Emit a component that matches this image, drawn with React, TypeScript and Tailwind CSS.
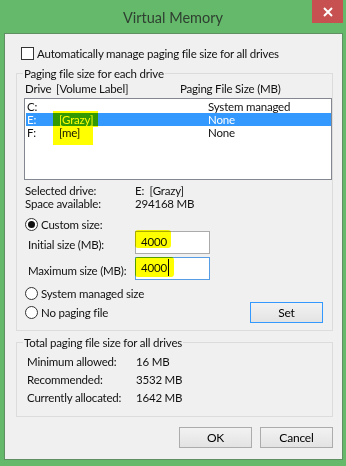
import React from "react";

const font = { fontFamily: 'Lato, "Noto Sans", sans-serif' };

function Radio({ checked }: { checked?: boolean }) {
  return (
    <span className="w-[13px] h-[13px] rounded-full border border-[#333333] bg-white flex items-center justify-center shrink-0">
      {checked && <span className="w-[7px] h-[7px] rounded-full bg-[#111111]" />}
    </span>
  );
}

function Btn({ label, focused }: { label: string; focused?: boolean }) {
  return (
    <div
      className={
        "w-[73px] h-[21px] flex items-center justify-center border bg-gradient-to-b from-[#f2f2f2] to-[#e3e3e3] text-[12px] text-black " +
        (focused ? "border-[#3399ff]" : "border-[#acacac]")
      }
    >
      {label}
    </div>
  );
}

export default function App() {
  return (
    <div
      className="relative w-[346px] h-[466px] bg-[#65b96a] overflow-hidden text-[11.5px] tracking-[-0.2px] text-[#111111]"
      style={font}
    >
      {/* Title bar */}
      <div className="h-[33px] flex items-center justify-center text-[14.5px] tracking-normal text-[#2f3f31] pt-[3px]">
        Virtual Memory
      </div>
      <div className="absolute top-0 left-[312px] w-[31px] h-[23px] bg-[#c75050] flex items-center justify-center">
        <svg width="10" height="10" viewBox="0 0 10 10">
          <path d="M1 1 L9 9 M9 1 L1 9" stroke="white" strokeWidth="2" />
        </svg>
      </div>

      {/* Client area */}
      <div className="ml-[4px] w-[339px] h-[427px] bg-[#f0f0f0] border border-[#5f8f63] flex flex-col">
        {/* Checkbox row */}
        <div className="mt-[13px] ml-[16px] h-[13px] flex items-center gap-[3px]">
          <span className="w-[13px] h-[13px] border border-[#333333] bg-white shrink-0" />
          <span className="leading-[13px] whitespace-nowrap">Automatically manage paging file size for all drives</span>
        </div>

        {/* Group 1 */}
        <fieldset className="mt-[6px] ml-[11px] w-[317px] border border-[#dcdcdc] p-0 m-0 flex flex-col">
          <legend className="ml-[6px] px-[1px] leading-[15px]">Paging file size for each drive</legend>
          <div className="mt-[1px] h-[14px] leading-[14px] flex whitespace-nowrap">
            <span className="ml-[8px] w-[31px]">Drive</span>
            <span className="w-[124px]">[Volume Label]</span>
            <span>Paging File Size (MB)</span>
          </div>
          <div className="mt-[2px] ml-[7px] w-[308px] h-[82px] border border-[#828790] bg-white pt-[1px] flex flex-col">
            <div className="ml-[1px] h-[13px] leading-[13px] flex whitespace-nowrap">
              <span className="pl-[1px] w-[33px]">C:</span>
              <span className="w-[149px]"></span>
              <span>System managed</span>
            </div>
            <div className="ml-[1px] h-[13px] leading-[13px] flex whitespace-nowrap bg-[#3399ff] text-white">
              <span className="pl-[1px] w-[33px]">E:</span>
              <span className="w-[149px]">[Grazy]</span>
              <span>None</span>
            </div>
            <div className="ml-[1px] h-[13px] leading-[13px] flex whitespace-nowrap">
              <span className="pl-[1px] w-[33px]">F:</span>
              <span className="w-[149px]">[me]</span>
              <span>None</span>
            </div>
          </div>

          <div className="mt-[4px] ml-[8px] h-[13px] leading-[13px] flex whitespace-nowrap">
            <span className="w-[110px]">Selected drive:</span>
            <span>E:&nbsp;&nbsp;[Grazy]</span>
          </div>
          <div className="ml-[8px] h-[13px] leading-[13px] flex whitespace-nowrap">
            <span className="w-[110px]">Space available:</span>
            <span>294168 MB</span>
          </div>

          <div className="mt-[8px] ml-[8px] h-[13px] flex items-center gap-[3px]">
            <Radio checked />
            <span className="leading-[13px] whitespace-nowrap">Custom size:</span>
          </div>
          <div className="ml-[11px] flex items-center whitespace-nowrap">
            <span className="w-[107px] leading-[13px] pt-[3px]">Initial size (MB):</span>
            <div className="w-[75px] h-[23px] border border-[#ababab] bg-white flex items-center pl-[5px] pb-[2px]">4000</div>
          </div>
          <div className="mt-[3px] ml-[11px] flex items-center whitespace-nowrap">
            <span className="w-[107px] leading-[13px] pt-[3px]">Maximum size (MB):</span>
            <div className="w-[75px] h-[23px] border border-[#569de5] bg-white flex items-center pl-[5px] pb-[2px]">
              4000<span className="ml-[1px] w-[1px] h-[17px] bg-black" />
            </div>
          </div>
          <div className="mt-[7px] ml-[8px] h-[13px] flex items-center gap-[3px]">
            <Radio />
            <span className="leading-[13px] whitespace-nowrap">System managed size</span>
          </div>
          <div className="mt-[2px] ml-[8px] mr-[9px] h-[21px] flex items-center justify-between">
            <div className="flex items-center gap-[3px]">
              <Radio />
              <span className="leading-[13px] whitespace-nowrap">No paging file</span>
            </div>
            <Btn label="Set" focused />
          </div>
          <div className="h-[7px]" />
        </fieldset>

        {/* Group 2 */}
        <fieldset className="mt-[4px] ml-[11px] w-[317px] border border-[#dcdcdc] p-0 m-0 flex flex-col">
          <legend className="ml-[6px] px-[1px] leading-[15px]">Total paging file size for all drives</legend>
          <div className="mt-[3px] ml-[10px] h-[18px] leading-[18px] flex whitespace-nowrap">
            <span className="w-[109px]">Minimum allowed:</span>
            <span>16 MB</span>
          </div>
          <div className="ml-[10px] h-[18px] leading-[18px] flex whitespace-nowrap">
            <span className="w-[109px]">Recommended:</span>
            <span>3532 MB</span>
          </div>
          <div className="ml-[10px] h-[18px] leading-[18px] flex whitespace-nowrap">
            <span className="w-[109px]">Currently allocated:</span>
            <span>1642 MB</span>
          </div>
          <div className="h-[9px]" />
        </fieldset>

        <div className="mt-[10px] mr-[9px] flex justify-end gap-[8px]">
          <Btn label="OK" />
          <Btn label="Cancel" />
        </div>
      </div>

      {/* Highlighter marks (overlay) */}
      <div className="absolute left-[53px] top-[111px] w-[45px] h-[16px] bg-[#ffff00] mix-blend-multiply" />
      <div className="absolute left-[53px] top-[127px] w-[40px] h-[18px] bg-[#ffff00] mix-blend-multiply" />
      <div className="absolute left-[135px] top-[230px] w-[36px] h-[18px] rounded-[3px] bg-[#ffff00] mix-blend-multiply" />
      <div className="absolute left-[135px] top-[257px] w-[39px] h-[20px] rounded-[3px] bg-[#ffff00] mix-blend-multiply" />
    </div>
  );
}
